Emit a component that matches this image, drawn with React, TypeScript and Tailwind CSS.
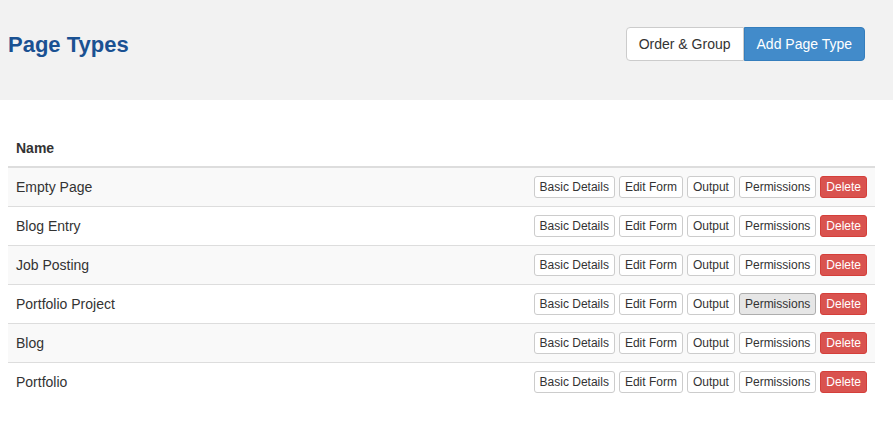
import React from 'react';

const ROWS = ['Empty Page', 'Blog Entry', 'Job Posting', 'Portfolio Project', 'Blog', 'Portfolio'];

function SmallButton({ label, active }: { label: string; active?: boolean }) {
  return (
    <button
      className={`h-[22px] px-[5px] text-[12px] leading-[20px] rounded-[3px] border text-[#333] ${
        active ? 'bg-[#e6e6e6] border-[#adadad]' : 'bg-white border-[#ccc]'
      }`}
    >
      {label}
    </button>
  );
}

export default function App() {
  return (
    <div className="w-[893px] h-[445px] bg-white font-['Liberation_Sans',Arial,sans-serif] text-[14px] text-[#333]">
      {/* Header */}
      <header className="h-[100px] bg-[#f2f2f2] flex items-center justify-between pl-[8px] pr-[28px]">
        <h1 className="text-[22px] font-bold text-[#1a5192] mb-[12px]">Page Types</h1>
        <div className="flex mb-[12px]">
          <button className="h-[34px] px-[12px] bg-white border border-[#ccc] rounded-l-[4px] text-[14px] text-[#333]">
            Order &amp; Group
          </button>
          <button className="h-[34px] px-[12px] bg-[#428bca] border border-[#357ebd] rounded-r-[4px] text-[14px] text-white">
            Add Page Type
          </button>
        </div>
      </header>

      {/* Table */}
      <div className="px-[8px] pt-[30px]">
        <table className="w-[867px] border-collapse">
          <thead>
            <tr className="border-b-2 border-[#ddd]">
              <th className="text-left font-bold p-[8px] leading-[20px]">Name</th>
              <th />
            </tr>
          </thead>
          <tbody>
            {ROWS.map((name, i) => (
              <tr key={name} className={`border-t border-[#ddd] ${i % 2 === 0 ? 'bg-[#f9f9f9]' : 'bg-white'}`}>
                <td className="px-[8px] py-[8px] h-[38px] leading-[20px]">{name}</td>
                <td className="px-[8px] py-[8px] text-right">
                  <div className="flex justify-end gap-[4px]">
                    <SmallButton label="Basic Details" />
                    <SmallButton label="Edit Form" />
                    <SmallButton label="Output" />
                    <SmallButton label="Permissions" active={i === 3} />
                    <button className="h-[22px] px-[5px] text-[12px] leading-[20px] rounded-[3px] border border-[#d43f3a] bg-[#d9534f] text-white">
                      Delete
                    </button>
                  </div>
                </td>
              </tr>
            ))}
          </tbody>
        </table>
      </div>
    </div>
  );
}
